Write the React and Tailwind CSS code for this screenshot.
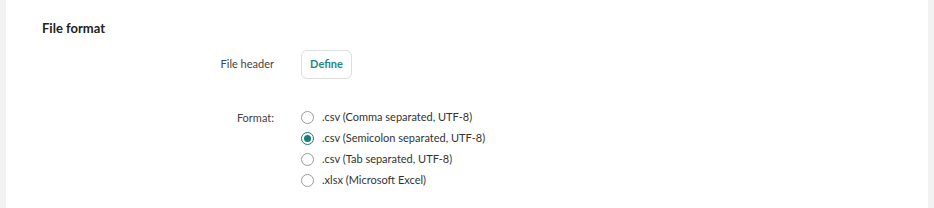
import React, { useState } from 'react';

const options = [
  '.csv (Comma separated, UTF-8)',
  '.csv (Semicolon separated, UTF-8)',
  '.csv (Tab separated, UTF-8)',
  '.xlsx (Microsoft Excel)',
];

const Radio = ({ checked }) => (
  <span
    className={`flex h-[13px] w-[13px] items-center justify-center rounded-full border ${
      checked ? 'border-[#16807f]' : 'border-[#9a9a9a]'
    }`}
  >
    {checked && <span className="h-[7px] w-[7px] rounded-full bg-[#16807f]" />}
  </span>
);

const App = () => {
  const [format, setFormat] = useState(1); // semicolon selected by default

  return (
    <div className="flex h-[208px] w-[934px] bg-[#f1f2f1] px-[6px] font-['Lato',sans-serif] text-[#333]">
      <div className="flex-1 bg-white pl-[36px] pt-[19px]">
        <h2 className="text-[13px] font-bold leading-[18px] text-[#222]">File format</h2>

        <div className="mt-[13px] flex items-center">
          <div className="w-[232px] text-right text-[11px] text-[#444]">File header</div>
          <button className="ml-[27px] h-[29px] w-[51px] rounded-[6px] border border-[#dedede] text-[11px] font-bold text-[#1b8a88]">
            Define
          </button>
        </div>

        <div className="mt-[28px] flex items-start">
          <div className="w-[232px] text-right text-[11px] leading-[21px] text-[#444]">Format:</div>
          <div className="ml-[27px] flex flex-col">
            {options.map((opt, i) => (
              <label
                key={opt}
                className="flex h-[21px] cursor-pointer items-center gap-[8px] text-[11px] text-[#333]"
                onClick={() => setFormat(i)}
              >
                <Radio checked={format === i} />
                <span>{opt}</span>
              </label>
            ))}
          </div>
        </div>
      </div>
    </div>
  );
};

export default App;
